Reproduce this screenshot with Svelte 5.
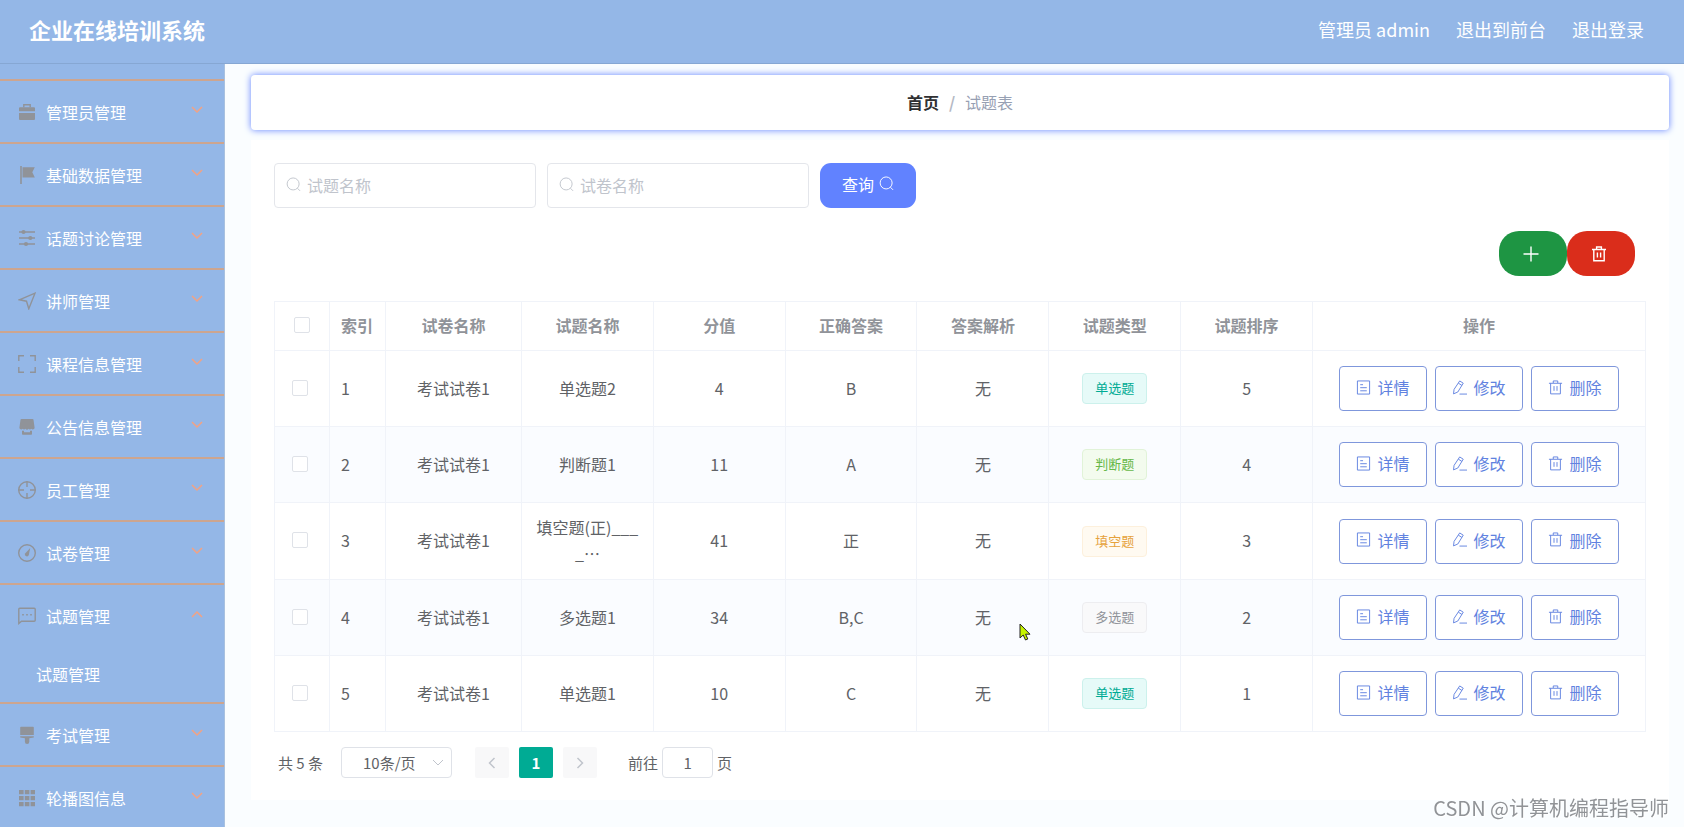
<script>
  let menus = [
    { icon: 'briefcase', title: '管理员管理' },
    { icon: 'flag', title: '基础数据管理' },
    { icon: 'operation', title: '话题讨论管理' },
    { icon: 'position', title: '讲师管理' },
    { icon: 'screen', title: '课程信息管理' },
    { icon: 'shop', title: '公告信息管理' },
    { icon: 'aim', title: '员工管理' },
    { icon: 'odometer', title: '试卷管理' },
    { icon: 'chat', title: '试题管理', open: true, children: ['试题管理'] },
    { icon: 'brush', title: '考试管理' },
    { icon: 'grid', title: '轮播图信息' }
  ];

  let rows = [
    { paper: '考试试卷1', name: '单选题2', score: 4, answer: 'B', note: '无', type: '单选题', sort: 5 },
    { paper: '考试试卷1', name: '判断题1', score: 11, answer: 'A', note: '无', type: '判断题', sort: 4 },
    { paper: '考试试卷1', name: '填空题(正)___\n_…', score: 41, answer: '正', note: '无', type: '填空题', sort: 3 },
    { paper: '考试试卷1', name: '多选题1', score: 34, answer: 'B,C', note: '无', type: '多选题', sort: 2 },
    { paper: '考试试卷1', name: '单选题1', score: 10, answer: 'C', note: '无', type: '单选题', sort: 1 }
  ];

  const tagClass = {
    单选题: 'primary',
    判断题: 'success',
    填空题: 'warning',
    多选题: 'info'
  };

  let selected = rows.map(() => false);
  let questionName = '';
  let paperName = '';
  let pageSize = '10';
  let page = '1';

  function toggleMenu(index) {
    menus[index].open = !menus[index].open;
    menus = menus;
  }

  function toggleAll(event) {
    selected = rows.map(() => event.target.checked);
  }
</script>

{#snippet searchIcon()}
  <svg class="icon" viewBox="0 0 16 16"><circle cx="7.6" cy="7.4" r="6.4" /><path d="M12.2 12l2.8 2.8" /></svg>
{/snippet}

{#snippet trashIcon()}
  <svg class="icon" viewBox="0 0 16 16"><path d="M1 3.5h14M2.8 3.5v11.3h10.4V3.5M5.6 3.2V1h4.8v2.2M6.4 6.5v5M9.6 6.5v5" /></svg>
{/snippet}

<header class="topbar">
  <h1>企业在线培训系统</h1>
  <nav class="user-nav">
    <span>管理员 admin</span>
    <a href="#front">退出到前台</a>
    <a href="#logout">退出登录</a>
  </nav>
</header>

<div class="layout">
  <aside class="sidebar">
    <ul class="menu">
      {#each menus as menu, index}
        <li class="menu-item">
          <button class="menu-title" aria-expanded={!!menu.open} on:click={() => toggleMenu(index)}>
            <svg class="menu-icon" viewBox="0 0 18 18">
              {#if menu.icon === 'briefcase'}
                <path class="solid" d="M2 4.200h14a1 1 0 0 1 1 1v3H1v-3a1 1 0 0 1 1-1zM1 10h16v6a1 1 0 0 1-1 1H2a1 1 0 0 1-1-1z" />
                <path d="M5.800 4.200V1.700h6.400v2.500" />
              {:else if menu.icon === 'flag'}
                <path class="solid" d="M2.200 0h1.600v18H2.200zM4.500 1.200h12.300l-2.500 5 2.500 5.300H4.500z" />
              {:else if menu.icon === 'operation'}
                <path d="M1 3h16M1 9h16M1 15h16" />
                <circle class="solid" cx="5.500" cy="3" r="2.100" />
                <circle class="solid" cx="12.300" cy="9" r="2.100" />
                <circle class="solid" cx="8" cy="15" r="2.100" />
              {:else if menu.icon === 'position'}
                <path d="M1.300 7.800L17 1.200l-6.200 15.600-2.300-7.600z" />
              {:else if menu.icon === 'screen'}
                <path d="M.8 6V.8H6M12 .8h5.200V6M17.200 12v5.200H12M6 17.200H.8V12" />
              {:else if menu.icon === 'shop'}
                <path class="solid" d="M3.500 1h11a1 1 0 0 1 1 .8L16.600 9.700a1.800 1.800 0 0 1-3.200 1.100 2 2 0 0 1-2.900 0 2 2 0 0 1-3 0 2 2 0 0 1-2.900 0A1.800 1.800 0 0 1 1.400 9.700L2.500 1.800A1 1 0 0 1 3.500 1zM4 12.800h2v1.400h6v-1.400h2v3.200a.8.8 0 0 1-.8.8H4.800A.8.8 0 0 1 4 16z" />
              {:else if menu.icon === 'aim'}
                <circle cx="9" cy="9" r="8.300" />
                <path d="M9 .7V6M9 12v5.300M.7 9H6M12 9h5.300" />
              {:else if menu.icon === 'odometer'}
                <circle cx="9" cy="9" r="8.300" />
                <path class="solid" d="M12.200 4L10.800 11a2 2 0 0 1-3.900-1.200z" />
              {:else if menu.icon === 'chat'}
                <path d="M.8 16.500V2.300A1 1 0 0 1 1.800 1.300h14.400a1 1 0 0 1 1 1v10.900a1 1 0 0 1-1 1H3.500z" />
                <path d="M4.200 7.800h1.600M8.200 7.800h1.600M12.200 7.800h1.600" />
              {:else if menu.icon === 'brush'}
                <path class="solid" d="M3 .8h12a.8.8 0 0 1 .8.8V9H2.200V1.600A.8.8 0 0 1 3 .8zM2.200 10.200h13.600v1.300l-4.500.8v3.500a2.200 2.200 0 0 1-4.400 0v-3.500l-4.700-.8z" />
              {:else}
                <path class="solid" d="M1 1h4.600v4.300H1zM6.800 1h4.600v4.300H6.800zM12.600 1H17v4.300h-4.400zM1 7h4.600v4.300H1zM6.800 7h4.600v4.300H6.800zM12.600 7H17v4.300h-4.400zM1 13h4.600v4.300H1zM6.800 13h4.600v4.300H6.800zM12.600 13H17v4.300h-4.400z" />
              {/if}
            </svg>
            <span>{menu.title}</span>
            <svg class="arrow" class:open={menu.open} viewBox="0 0 12 12"><path d="M1 3l5 5 5-5" /></svg>
          </button>
          {#if menu.open && menu.children}
            <ul class="submenu">
              {#each menu.children as child}
                <li><a href="#question">{child}</a></li>
              {/each}
            </ul>
          {/if}
        </li>
      {/each}
    </ul>
  </aside>

  <main class="main">
    <nav class="breadcrumb">
      <a href="#home">首页</a>
      <span class="separator">/</span>
      <span>试题表</span>
    </nav>

    <section class="panel">
      <form class="search" on:submit|preventDefault>
        <label class="field">
          {@render searchIcon()}
          <input type="text" placeholder="试题名称" aria-label="试题名称" bind:value={questionName} />
        </label>
        <label class="field">
          {@render searchIcon()}
          <input type="text" placeholder="试卷名称" aria-label="试卷名称" bind:value={paperName} />
        </label>
        <button class="query" type="submit">查询{@render searchIcon()}</button>
      </form>

      <div class="actions">
        <button class="add" aria-label="新增">
          <svg class="icon" viewBox="0 0 16 16"><path d="M8 .5v15M.5 8h15" /></svg>
        </button>
        <button class="delete" aria-label="删除">{@render trashIcon()}</button>
      </div>

      <table>
        <colgroup>
          <col class="col-check" />
          <col class="col-index" />
          <col class="col-paper" />
          <col span="6" />
          <col class="col-ops" />
        </colgroup>
        <thead>
          <tr>
            <th><input type="checkbox" aria-label="全选" on:change={toggleAll} /></th>
            <th class="left">索引</th>
            <th>试卷名称</th>
            <th>试题名称</th>
            <th>分值</th>
            <th>正确答案</th>
            <th>答案解析</th>
            <th>试题类型</th>
            <th>试题排序</th>
            <th>操作</th>
          </tr>
        </thead>
        <tbody>
          {#each rows as row, index}
            <tr>
              <td class="check"><input type="checkbox" aria-label="选择" bind:checked={selected[index]} /></td>
              <td class="left">{index + 1}</td>
              <td>{row.paper}</td>
              <td class="name">{row.name}</td>
              <td>{row.score}</td>
              <td>{row.answer}</td>
              <td>{row.note}</td>
              <td class="boxed"><span class="tag {tagClass[row.type]}">{row.type}</span></td>
              <td>{row.sort}</td>
              <td class="boxed">
                <div class="ops">
                  <button>
                    <svg class="icon" viewBox="0 0 16 16"><path d="M1.500 1h13v14h-13zM4.500 5h3M4.500 8.200h7M4.500 11.500h7" /></svg>
                    详情
                  </button>
                  <button>
                    <svg class="icon" viewBox="0 0 16 16"><path d="M8.200 1l3.800 2.400-5.800 9.400-4.600 2 .6-4.800zM6.800 3.400l3.800 2.400M8 15h8" /></svg>
                    修改
                  </button>
                  <button>
                    {@render trashIcon()}
                    删除
                  </button>
                </div>
              </td>
            </tr>
          {/each}
        </tbody>
      </table>

      <div class="pagination">
        <span>共 5 条</span>
        <div class="size">
          <select aria-label="每页条数" bind:value={pageSize}>
            <option value="10">10条/页</option>
            <option value="20">20条/页</option>
            <option value="50">50条/页</option>
          </select>
          <svg class="size-arrow" viewBox="0 0 12 12"><path d="M1 3l5 5 5-5" /></svg>
        </div>
        <div class="pager">
          <button aria-label="上一页" disabled><svg viewBox="0 0 12 12"><path d="M8.500 1l-5 5 5 5" /></svg></button>
          <button class="active">1</button>
          <button aria-label="下一页" disabled><svg viewBox="0 0 12 12"><path d="M3.500 1l5 5-5 5" /></svg></button>
        </div>
        <label class="jump">前往<input type="text" bind:value={page} />页</label>
      </div>
    </section>
  </main>
</div>

<svg class="cursor" viewBox="0 0 12 18"><path d="M1 1v14l3.200-3 2.300 5 2.300-1-2.200-4.800H11z" /></svg>
<div class="watermark">CSDN @计算机编程指导师</div>

<style>
  :global(body) {
    background: #fafdff;
    color: #606266;
    font-family: "Noto Sans CJK SC", "Noto Sans", sans-serif;
    font-size: 16px;
  }
  :global(#app) {
    display: flex;
    flex-direction: column;
    height: 100vh;
    overflow: hidden;
  }
  h1, ul {
    margin: 0;
    padding: 0;
    list-style: none;
  }
  a {
    color: inherit;
    text-decoration: none;
  }
  button, input, select {
    box-sizing: border-box;
    margin: 0;
    font: inherit;
    color: inherit;
  }
  button {
    padding: 0;
    border: none;
    background: none;
    cursor: pointer;
  }
  svg {
    flex: none;
    fill: none;
    stroke: currentColor;
  }
  .icon {
    width: 15px;
    height: 15px;
  }

  .topbar {
    display: flex;
    flex: none;
    align-items: center;
    justify-content: space-between;
    box-sizing: border-box;
    height: 64px;
    padding: 0 40px 5px 29px;
    border-bottom: 1px solid #86a7d3;
    background: #94b7e7;
    color: #fff;
  }
  h1 {
    font-size: 22px;
    line-height: 32px;
  }
  .user-nav {
    display: flex;
    gap: 26px;
    font-size: 18px;
  }

  .layout {
    display: flex;
    flex: 1;
    min-height: 0;
  }
  .sidebar {
    flex: none;
    box-sizing: border-box;
    width: 225px;
    padding-top: 15px;
    overflow: hidden;
    background: #94b7e7;
    border-right: 1px solid #a9c1df;
    color: #fff;
  }
  .menu-item {
    border-top: 2px solid #cda58f;
  }
  .menu-title {
    display: flex;
    align-items: center;
    width: 100%;
    height: 61px;
    padding: 1px 21px 0 18px;
    text-align: left;
  }
  .menu-title span {
    flex: 1;
  }
  .menu-icon {
    width: 18px;
    height: 18px;
    margin-right: 10px;
    color: #909399;
    stroke-width: 1.4;
  }
  .solid {
    fill: currentColor;
    stroke: none;
  }
  .arrow {
    width: 12px;
    height: 12px;
    margin-bottom: 4px;
    color: #f3a283;
    stroke-width: 1.5;
  }
  .arrow.open {
    transform: rotate(180deg);
  }
  .submenu a {
    display: block;
    padding-left: 36px;
    line-height: 56px;
  }

  .main {
    flex: 1;
    min-width: 0;
    padding: 11px 15px 0 26px;
    overflow: hidden;
  }
  .breadcrumb {
    display: flex;
    align-items: center;
    justify-content: center;
    gap: 10px;
    box-sizing: border-box;
    height: 55px;
    padding-bottom: 2px;
    border-radius: 4px;
    background: #fff;
    box-shadow: 0 0 7px #6182ff;
    color: #97a0b3;
  }
  .breadcrumb a {
    color: #303133;
    font-weight: bold;
  }
  .separator {
    color: #b4b9c4;
    font-weight: bold;
  }

  .panel {
    margin-top: 10px;
    padding: 23px 23px 22px;
    background: #fff;
  }
  .search {
    display: flex;
    gap: 11px;
  }
  .field {
    display: flex;
    align-items: center;
    gap: 6px;
    box-sizing: border-box;
    width: 262px;
    height: 45px;
    padding: 0 11px 2px;
    border: 1px solid #e4e6eb;
    border-radius: 4px;
    color: #c0c4cc;
  }
  .field input {
    width: 100%;
    min-width: 0;
    padding: 0;
    border: none;
    outline: none;
    background: none;
    color: #606266;
  }
  .field input::placeholder {
    color: #c0c4cc;
  }
  .query {
    display: flex;
    align-items: center;
    justify-content: center;
    gap: 5px;
    width: 96px;
    height: 45px;
    padding-bottom: 4px;
    border-radius: 11px;
    background: #6182ff;
    color: #fff;
  }
  .actions {
    display: flex;
    justify-content: flex-end;
    margin: 23px 11px 25px 0;
  }
  .actions button {
    display: flex;
    align-items: center;
    justify-content: center;
    width: 68px;
    height: 45px;
    padding-right: 5px;
    border-radius: 20px;
    color: #fff;
    stroke-width: 1.4;
  }
  .actions .icon {
    width: 16px;
    height: 16px;
  }
  .actions .add {
    background: #1e9543;
  }
  .actions .delete {
    background: #da2d1b;
  }

  table {
    width: 100%;
    table-layout: fixed;
    border-collapse: collapse;
  }
  .col-check {
    width: 55px;
  }
  .col-index {
    width: 56px;
  }
  .col-paper {
    width: 136px;
  }
  .col-ops {
    width: 333px;
  }
  th, td {
    border: 1px solid #f0f3f9;
    line-height: 26px;
    text-align: center;
  }
  th {
    height: 46px;
    padding: 0 0 2px;
    color: #909399;
  }
  td {
    height: 51px;
    padding: 11px 0 13px;
  }
  .boxed {
    padding: 12px 0;
  }
  tbody tr:nth-child(even) {
    background: #fafcff;
  }
  .left {
    padding-left: 11px;
    text-align: left;
  }
  .check {
    padding-right: 5px;
  }
  .name {
    white-space: pre-line;
  }
  input[type="checkbox"] {
    display: block;
    appearance: none;
    width: 16px;
    height: 16px;
    margin: 0 auto;
    border: 1px solid #dfe2e8;
    border-radius: 2px;
    background: #fff;
  }
  input[type="checkbox"]:checked {
    border-color: #00ab94;
    background: #00ab94;
  }
  .tag {
    display: inline-block;
    box-sizing: border-box;
    height: 31px;
    padding: 0 12px;
    border: 1px solid;
    border-radius: 4px;
    font-size: 13px;
    line-height: 28px;
    vertical-align: middle;
  }
  .primary {
    border-color: #ccf1ec;
    background: #e6faf8;
    color: #00ab94;
  }
  .success {
    border-color: #e1f3d8;
    background: #f3fbee;
    color: #67b84a;
  }
  .warning {
    border-color: #fdf0dc;
    background: #fffaf1;
    color: #e6a23c;
  }
  .info {
    border-color: #ededf0;
    background: #f9f9fa;
    color: #909399;
  }
  .ops {
    display: flex;
    justify-content: center;
    gap: 8px;
  }
  .ops button {
    display: flex;
    align-items: center;
    justify-content: center;
    gap: 6px;
    width: 88px;
    height: 45px;
    padding-bottom: 3px;
    border: 1px solid #7f97dc;
    border-radius: 4px;
    background: #fff;
    color: #6182e0;
  }

  .pagination {
    display: flex;
    align-items: center;
    height: 31px;
    margin-top: 15px;
    padding-left: 4px;
    font-size: 15px;
  }
  .size {
    position: relative;
    margin: 0 23px 0 18px;
  }
  .size select {
    display: block;
    appearance: none;
    width: 111px;
    height: 31px;
    padding: 0 21px;
    border: 1px solid #dfe2e8;
    border-radius: 4px;
    background: #fff;
  }
  .size-arrow {
    position: absolute;
    top: 10px;
    right: 8px;
    width: 12px;
    height: 12px;
    color: #c0c4cc;
    pointer-events: none;
  }
  .pager {
    display: flex;
    gap: 10px;
  }
  .pager button {
    display: flex;
    align-items: center;
    justify-content: center;
    width: 34px;
    height: 31px;
    border-radius: 2px;
    background: #f8f8f9;
    color: #c0c4cc;
  }
  .pager svg {
    width: 12px;
    height: 12px;
    stroke-width: 1.5;
  }
  .pager .active {
    background: #00ab94;
    color: #fff;
    font-weight: bold;
  }
  .jump {
    display: flex;
    align-items: center;
    gap: 4px;
    margin-left: 31px;
  }
  .jump input {
    width: 51px;
    height: 31px;
    padding: 0;
    border: 1px solid #dfe2e8;
    border-radius: 4px;
    text-align: center;
  }

  .cursor {
    position: fixed;
    top: 623px;
    left: 1019px;
    width: 12px;
    height: 18px;
    fill: #c6f400;
    stroke: #222;
    pointer-events: none;
  }
  .watermark {
    position: fixed;
    right: 15px;
    bottom: 4px;
    color: #909397;
    font-size: 20px;
    line-height: 30px;
    text-shadow: 1px 1px 0 #fff;
  }
</style>
